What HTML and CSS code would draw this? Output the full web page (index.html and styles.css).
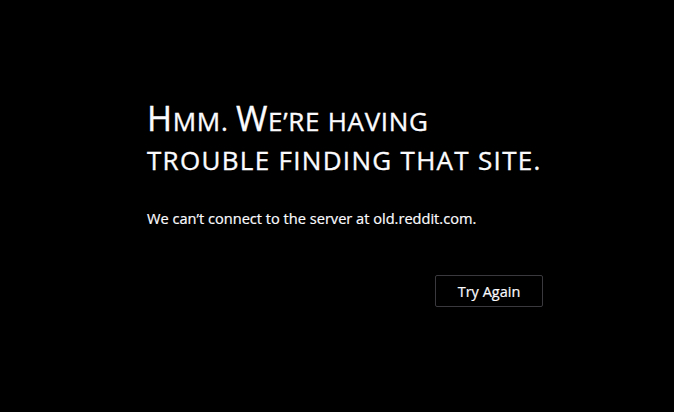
FILE: index.html
```html
<!DOCTYPE html>
<html lang="en">
<head>
<meta charset="utf-8">
<title>Problem loading page</title>
<link rel="stylesheet" href="styles.css">
</head>
<body>
<main class="page">
  <div class="container">
    <h1 class="title"><span class="line line-1"><span class="cap">H</span>mm. <span class="cap">W</span>e’re having</span><span class="line line-2">trouble finding that site.</span></h1>
    <p class="desc">We can’t connect to the server at old.reddit.com.</p>
    <div class="actions">
      <button class="btn">Try Again</button>
    </div>
  </div>
</main>
</body>
</html>
```
FILE: styles.css
```css
html, body {
  margin: 0;
  padding: 0;
  background: #000;
  color: #fbfbfe;
  font-family: "Open Sans", "DejaVu Sans", sans-serif;
}
.page {
  height: 412px;
  box-sizing: border-box;
  padding: 99px 0 0 147px;
}
.container {
  width: 396px;
}
.title {
  margin: 0;
  font-size: 26px;
  font-weight: 400;
  text-transform: uppercase;
  line-height: 39px;
  white-space: nowrap;
  -webkit-text-stroke: 0.35px #fbfbfe;
}
.line {
  display: block;
}
.line-1 {
  letter-spacing: 0.7px;
}
.line-2 {
  letter-spacing: 1.3px;
}
.cap {
  font-size: 34px;
}
.desc {
  margin: 28px 0 0;
  font-size: 14.6px;
  line-height: 20px;
  -webkit-text-stroke: 0.2px #fbfbfe;
}
.actions {
  display: flex;
  justify-content: flex-end;
  margin-top: 47px;
}
.btn {
  font-family: inherit;
  font-size: 14.5px;
  color: #fbfbfe;
  background: #000;
  border: 1px solid #3a3a3e;
  border-radius: 2px;
  width: 108px;
  height: 32px;
  padding: 0;
  -webkit-text-stroke: 0.2px #fbfbfe;
}
```
